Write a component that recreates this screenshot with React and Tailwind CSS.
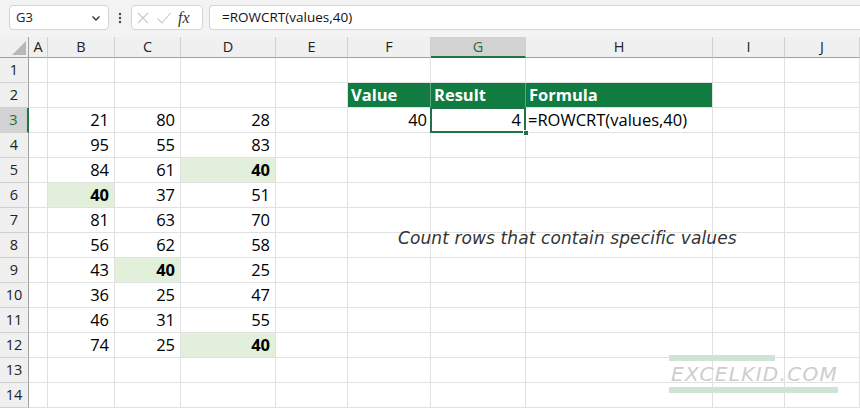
import React from 'react';

const cols = ['A', 'B', 'C', 'D', 'E', 'F', 'G', 'H', 'I', 'J'];

// rows 3-12, columns B, C, D; bold = the cell holds the searched value
const data = [
  [21, 80, 28],
  [95, 55, 83],
  [84, 61, 40],
  [40, 37, 51],
  [81, 63, 70],
  [56, 62, 58],
  [43, 40, 25],
  [36, 25, 47],
  [46, 31, 55],
  [74, 25, 40],
];

const font = { fontFamily: '"Open Sans", "Noto Sans", sans-serif' };

const Cell = ({ children, className = '' }) => (
  <div className={`h-[25px] border-r border-b border-[#e1e1e1] flex items-center text-[16.5px] text-black overflow-visible whitespace-nowrap ${className}`}>
    {children}
  </div>
);

const FormulaBar = () => (
  <div className="h-[37px] bg-[#f3f3f3] flex items-start pt-[5px] pl-[9px] gap-0">
    <div className="w-[100px] h-[25px] bg-white border border-[#d4d4d4] rounded-[4px] flex items-center justify-between px-[6px]">
      <span className="text-[13px] text-[#222]">G3</span>
      <svg width="10" height="10" viewBox="0 0 10 10" className="mr-[1px]">
        <path d="M1.5 3.5 L5 7 L8.5 3.5" fill="none" stroke="#333" strokeWidth="1.4" />
      </svg>
    </div>
    <div className="w-[22px] h-[25px] flex items-center justify-center">
      <svg width="4" height="12" viewBox="0 0 4 12">
        <circle cx="2" cy="2" r="1.2" fill="#444" />
        <circle cx="2" cy="6" r="1.2" fill="#444" />
        <circle cx="2" cy="10" r="1.2" fill="#444" />
      </svg>
    </div>
    <div className="w-[72px] h-[25px] bg-white border border-[#d4d4d4] rounded-[4px] flex items-center px-[4px] gap-[6px]">
      <svg width="14" height="14" viewBox="0 0 14 14">
        <path d="M2 2 L12 12 M12 2 L2 12" stroke="#c8c8c8" strokeWidth="1.1" />
      </svg>
      <svg width="16" height="14" viewBox="0 0 16 14">
        <path d="M1.5 7.5 L6 12 L14.5 2" fill="none" stroke="#c8c8c8" strokeWidth="1.1" />
      </svg>
      <span className="text-[16px] italic text-[#333] leading-none" style={{ fontFamily: '"Liberation Serif", serif' }}>fx</span>
    </div>
    <div className="ml-[6px] flex-1 h-[25px] bg-white border border-[#d4d4d4] border-r-0 rounded-l-[4px] flex items-center pl-[12px]">
      <span className="text-[13.5px] text-[#111]">=ROWCRT(values,40)</span>
    </div>
  </div>
);

const App = () => {
  return (
    <div className="w-[860px] h-[408px] bg-white overflow-hidden relative" style={font}>
      <FormulaBar />

      <div className="grid grid-cols-[29px_19px_67px_66px_95px_72px_83px_95px_187px_72px_1fr]">
        {/* column headers */}
        <div className="h-[21px] bg-[#f0f0f0] border-r border-b border-[#a0a0a0] flex items-end justify-end pr-[2px] pb-[2px]">
          <svg width="14" height="14" viewBox="0 0 14 14">
            <path d="M14 0 L14 14 L0 14 Z" fill="#b8b8b8" />
          </svg>
        </div>
        {cols.map((c) => (
          <div
            key={c}
            className={`h-[21px] flex items-center justify-center text-[14.5px] border-r border-[#d0d0d0] ${
              c === 'G'
                ? 'bg-[#d2d2d2] text-[#1e6b41] border-b-2 border-b-[#217346]'
                : 'bg-[#f0f0f0] text-[#222] border-b border-b-[#a0a0a0]'
            }`}
          >
            {c}
          </div>
        ))}

        {/* rows 1 to 14 */}
        {Array.from({ length: 14 }, (_, i) => {
          const r = i + 1;
          const vals = r >= 3 && r <= 12 ? data[r - 3] : null;
          return (
            <React.Fragment key={r}>
              <div
                className={`h-[25px] flex items-center justify-center text-[14.5px] border-b border-[#d0d0d0] ${
                  r === 3
                    ? 'bg-[#d2d2d2] text-[#1e6b41] border-r-2 border-r-[#217346]'
                    : 'bg-[#f0f0f0] text-[#222] border-r border-r-[#a0a0a0]'
                }`}
              >
                {r}
              </div>
              <Cell />
              {[0, 1, 2].map((k) => {
                const v = vals ? vals[k] : null;
                const hit = v === 40;
                return (
                  <Cell key={k} className={`justify-end pr-[5px] ${hit ? 'bg-[#e2efda] font-bold' : ''}`}>
                    {v}
                  </Cell>
                );
              })}
              <Cell />
              {r === 2 ? (
                <>
                  <Cell className="bg-[#107c41] text-white font-bold pl-[3px] border-r-[#5fa57f] border-b-[#e1e1e1]">Value</Cell>
                  <Cell className="bg-[#107c41] text-white font-bold pl-[3px] border-r-[#5fa57f] border-b-[#e1e1e1]">Result</Cell>
                  <Cell className="bg-[#107c41] text-white font-bold pl-[3px] border-b-[#e1e1e1]">Formula</Cell>
                </>
              ) : r === 3 ? (
                <>
                  <Cell className="justify-end pr-[3px]">40</Cell>
                  <Cell className="justify-end pr-[4px] relative">
                    4
                    <div className="absolute -left-px -top-px -right-px -bottom-px border-2 border-[#217346]" />
                    <div className="absolute -right-[4px] -bottom-[4px] w-[6px] h-[6px] bg-[#217346] border border-white" />
                  </Cell>
                  <Cell className="pl-[2px]">=ROWCRT(values,40)</Cell>
                </>
              ) : (
                <>
                  <Cell />
                  <Cell />
                  <Cell />
                </>
              )}
              <Cell />
              <Cell />
            </React.Fragment>
          );
        })}
      </div>

      {/* floating text box */}
      <div
        className="absolute left-[398px] top-[226px] text-[17px] italic text-[#333] tracking-[0.1px]"
        style={{ fontFamily: '"DejaVu Sans", sans-serif' }}
      >
        Count rows that contain specific values
      </div>

      {/* watermark */}
      <div className="absolute left-[669px] top-[355px] w-[170px] h-[40px]">
        <div className="w-[106px] h-[6px] bg-[#cfe3d7]" />
        <div className="h-[26px] flex items-center pl-[2px] text-[20px] italic text-[#cdcdcd] tracking-[1.3px] leading-none" style={{ fontFamily: '"DejaVu Sans", sans-serif' }}>
          EXCELKID.COM
        </div>
        <div className="w-[169px] h-[6px] bg-[#cfe3d7]" />
      </div>
    </div>
  );
};

export default App;
